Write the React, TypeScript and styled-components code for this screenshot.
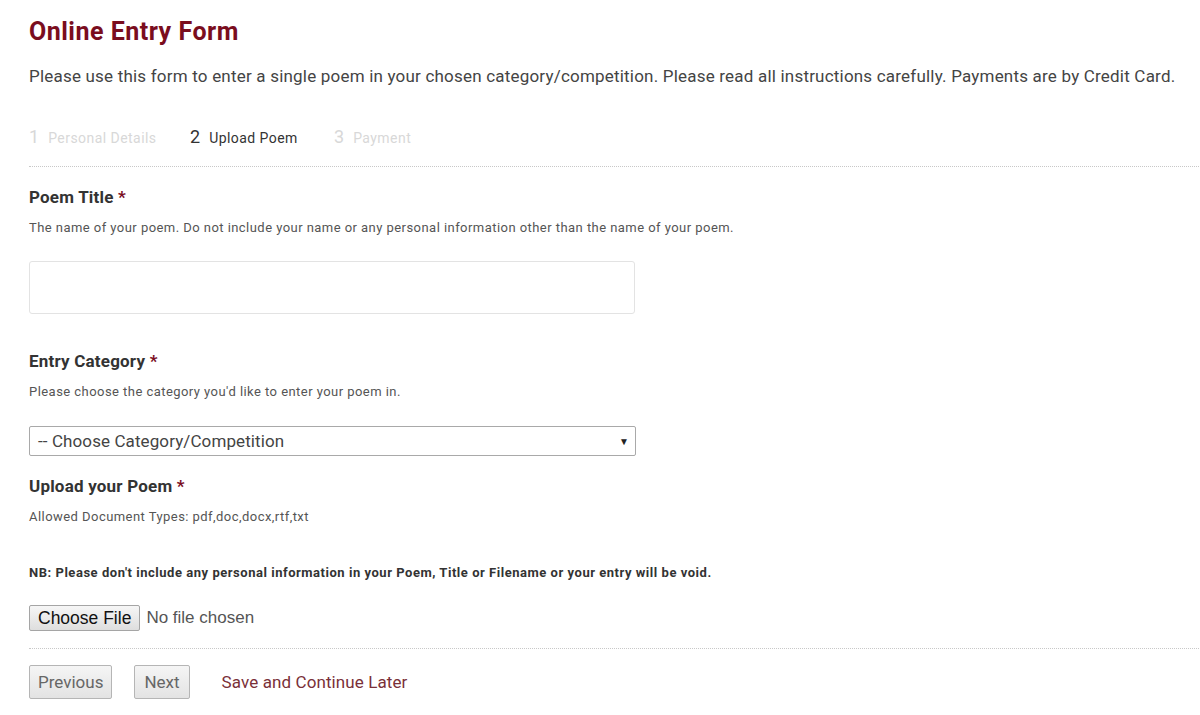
import React from "react";
import styled, { createGlobalStyle } from "styled-components";

const Global = createGlobalStyle`
  html, body { margin: 0; padding: 0; background: #fff; }
  body { font-family: Roboto, "Liberation Sans", sans-serif; color: #444; overflow: hidden; }
  * { box-sizing: border-box; }
`;

const Page = styled.div`
  padding: 15px 0 0 29px;
  width: 1200px;
  height: 715px;
  overflow: hidden;
`;

const Title = styled.h1`
  margin: 0;
  font-size: 25px;
  line-height: 34px;
  letter-spacing: 0.5px;
  font-weight: 700;
  color: #7a0d1e;
`;

const Intro = styled.p`
  margin: 16px 0 0;
  font-size: 17px;
  line-height: 22px;
  letter-spacing: 0.2px;
  color: #444;
  white-space: nowrap;
`;

const Steps = styled.div`
  display: flex;
  align-items: baseline;
  margin-top: 39px;
  height: 24px;
`;

const Step = styled.div<{ $active?: boolean; $w: number }>`
  display: flex;
  align-items: baseline;
  gap: 9px;
  width: ${(p) => p.$w}px;
  color: ${(p) => (p.$active ? "#333" : "#d8d8d8")};
`;

const StepNum = styled.span`
  font-size: 18px;
`;

const StepLabel = styled.span`
  font-size: 14px;
  letter-spacing: 0.45px;
`;

const Divider = styled.hr`
  margin: 0;
  border: 0;
  border-top: 1px dotted #c8c8c8;
  width: 1200px;
`;

const TopDivider = styled(Divider)`
  margin-top: 16px;
`;

const Field = styled.div<{ $top: number }>`
  margin-top: ${(p) => p.$top}px;
`;

const Label = styled.div`
  font-size: 17px;
  font-weight: 700;
  letter-spacing: 0.2px;
  color: #333;
  line-height: 22px;
`;

const Req = styled.span`
  color: #7a0d1e;
`;

const Desc = styled.div`
  margin-top: 11px;
  font-size: 13px;
  letter-spacing: 0.45px;
  line-height: 18px;
  color: #555;
`;

const TextInput = styled.input`
  display: block;
  margin-top: 24px;
  width: 606px;
  height: 53px;
  border: 1px solid #e3e3e3;
  border-radius: 3px;
  background: #fff;
  outline: none;
`;

const SelectBox = styled.div`
  margin-top: 25px;
  width: 607px;
  height: 30px;
  border: 1px solid #a9a9a9;
  border-radius: 2px;
  display: flex;
  align-items: center;
  justify-content: space-between;
  padding: 0 6px 0 8px;
  font-size: 17px;
  letter-spacing: 0.1px;
  color: #444;
  background: #fff;
`;

const Arrow = styled.span`
  font-size: 10px;
  color: #222;
`;

const Nb = styled.div`
  margin-top: 38px;
  font-size: 13px;
  letter-spacing: 0.53px;
  line-height: 18px;
  font-weight: 700;
  color: #333;
`;

const FileRow = styled.div`
  margin-top: 23px;
  display: flex;
  align-items: center;
  gap: 6px;
  font-family: "Liberation Sans", Arial, sans-serif;
  font-size: 17.5px;
`;

const FileButton = styled.button`
  height: 26px;
  padding: 0 8px;
  font-family: "Liberation Sans", Arial, sans-serif;
  font-size: 17.5px;
  color: #111;
  background: linear-gradient(#f6f6f6, #dedede);
  border: 1px solid #a5a5a5;
  border-radius: 2px;
`;

const NoFile = styled.span`
  color: #555;
  font-size: 17px;
`;

const BottomDivider = styled(Divider)`
  margin-top: 17px;
`;

const Actions = styled.div`
  margin-top: 16px;
  display: flex;
  align-items: center;
`;

const NavButton = styled.button<{ $gap: number; $pad: number }>`
  height: 34px;
  padding: 0 ${(p) => p.$pad}px;
  margin-right: ${(p) => p.$gap}px;
  font-family: Roboto, "Liberation Sans", sans-serif;
  font-size: 17px;
  color: #666;
  background: linear-gradient(#f5f5f5, #e3e3e3);
  border: 1px solid #b5b5b5;
  border-radius: 2px;
`;

const SaveLink = styled.a`
  font-size: 17px;
  letter-spacing: 0.1px;
  color: #7a3038;
  text-decoration: none;
`;

export default function App() {
  return (
    <>
      <Global />
      <Page>
        <Title>Online Entry Form</Title>
        <Intro>
          Please use this form to enter a single poem in your chosen category/competition. Please read all instructions carefully. Payments are by Credit Card.
        </Intro>
        <Steps>
          <Step $w={161}>
            <StepNum>1</StepNum>
            <StepLabel>Personal Details</StepLabel>
          </Step>
          <Step $w={144} $active>
            <StepNum>2</StepNum>
            <StepLabel>Upload Poem</StepLabel>
          </Step>
          <Step $w={120}>
            <StepNum>3</StepNum>
            <StepLabel>Payment</StepLabel>
          </Step>
        </Steps>
        <TopDivider />
        <Field $top={19}>
          <Label>
            Poem Title <Req>*</Req>
          </Label>
          <Desc>
            The name of your poem. Do not include your name or any personal information other than the name of your poem.
          </Desc>
          <TextInput type="text" />
        </Field>
        <Field $top={36}>
          <Label>
            Entry Category <Req>*</Req>
          </Label>
          <Desc>Please choose the category you'd like to enter your poem in.</Desc>
          <SelectBox>
            <span>-- Choose Category/Competition</span>
            <Arrow>▼</Arrow>
          </SelectBox>
        </Field>
        <Field $top={19}>
          <Label>
            Upload your Poem <Req>*</Req>
          </Label>
          <Desc>Allowed Document Types: pdf,doc,docx,rtf,txt</Desc>
          <Nb>NB: Please don't include any personal information in your Poem, Title or Filename or your entry will be void.</Nb>
          <FileRow>
            <FileButton>Choose File</FileButton>
            <NoFile>No file chosen</NoFile>
          </FileRow>
        </Field>
        <BottomDivider />
        <Actions>
          <NavButton $gap={22} $pad={8}>Previous</NavButton>
          <NavButton $gap={32} $pad={9}>Next</NavButton>
          <SaveLink href="#">Save and Continue Later</SaveLink>
        </Actions>
      </Page>
    </>
  );
}
